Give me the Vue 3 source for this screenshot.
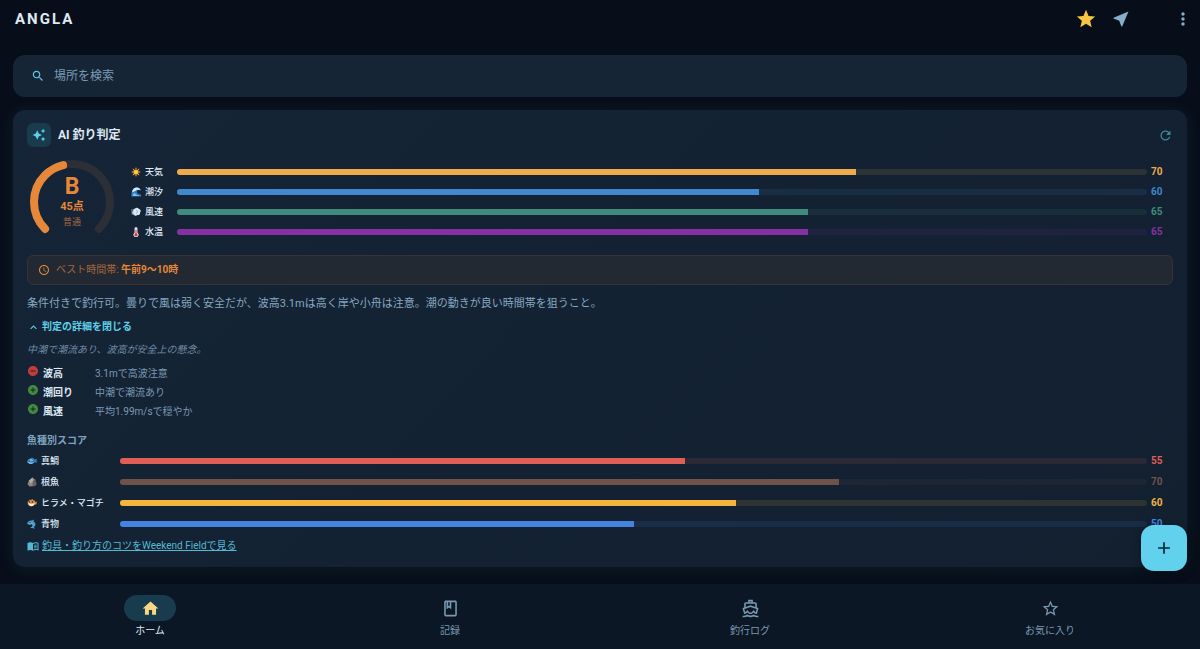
<script setup>
import { ref } from 'vue'

const query = ref('')
const open = ref(true)

const scores = [
  { key: 'sun', label: '天気', value: 70, color: '#efab4b' },
  { key: 'wave', label: '潮汐', value: 60, color: '#4088cf' },
  { key: 'wind', label: '風速', value: 65, color: '#3f8c7e' },
  { key: 'thermo', label: '水温', value: 65, color: '#8730a4' },
]

const factors = [
  { good: false, name: '波高', text: '3.1mで高波注意' },
  { good: true, name: '潮回り', text: '中潮で潮流あり' },
  { good: true, name: '風速', text: '平均1.99m/sで穏やか' },
]

const species = [
  { key: 'fish', label: '真鯛', value: 55, color: '#df5f57' },
  { key: 'rock', label: '根魚', value: 70, color: '#6f534b' },
  { key: 'puffer', label: 'ヒラメ・マゴチ', value: 60, color: '#f4b53f' },
  { key: 'dolphin', label: '青物', value: 50, color: '#4583e0' },
]

const groups = [
  { name: 'scores', rows: scores },
  { name: 'species', rows: species },
]

const tabs = [
  { label: 'ホーム', active: true, path: 'M10 20v-6h4v6h5v-8h3L12 3 2 12h3v8z' },
  {
    label: '記録',
    path: 'M18 2H6c-1.1 0-2 .9-2 2v16c0 1.1.9 2 2 2h12c1.1 0 2-.9 2-2V4c0-1.1-.9-2-2-2zM9 4h2v5l-1-.75L9 9V4zm9 16H6V4h1v9l3-2.25L13 13V4h5v16z',
  },
  {
    label: '釣行ログ',
    path: 'M13 3v1h-2V3h2m-1 7.11l5.38 1.77 2.39.78-1.12 3.97c-.54-.3-.94-.71-1.14-.94L16 13.96l-1.51 1.72c-.34.4-1.28 1.32-2.49 1.32s-2.15-.92-2.49-1.32L8 13.96l-1.51 1.72c-.2.23-.6.63-1.14.93l-1.13-3.96 2.4-.79L12 10.11M15 1H9v3H6c-1.1 0-2 .9-2 2v4.62l-1.29.42c-.26.08-.48.26-.6.5s-.15.52-.06.78L3.95 19H4c1.6 0 3.02-.88 4-2 .98 1.12 2.4 2 4 2s3.02-.88 4-2c.98 1.12 2.4 2 4 2h.05l1.89-6.68c.08-.26.06-.54-.06-.78s-.34-.42-.6-.5L20 10.62V6c0-1.1-.9-2-2-2h-3V1zM6 9.97V6h12v3.97L12 8 6 9.97zM16 19.68c-1.22.85-2.61 1.28-4 1.28s-2.78-.43-4-1.28C6.78 20.53 5.39 21 4 21H2v2h2c1.38 0 2.74-.35 4-.99 1.26.64 2.63.97 4 .97s2.74-.32 4-.97c1.26.65 2.62.99 4 .99h2v-2h-2c-1.39 0-2.78-.43-4-1.32z',
  },
  {
    label: 'お気に入り',
    path: 'M22 9.24l-7.19-.62L12 2 9.19 8.63 2 9.24l5.46 4.73L5.82 21 12 17.27 18.18 21l-1.63-7.03L22 9.24zM12 15.4l-3.76 2.27 1-4.28-3.32-2.88 4.38-.38L12 6.1l1.71 4.04 4.38.38-3.32 2.88 1 4.28L12 15.4z',
  },
]
</script>

<template>
  <div class="app">
    <!-- shared pictograms for the score rows -->
    <svg class="defs" aria-hidden="true">
      <symbol id="sun" viewBox="0 0 20 20">
        <path fill="#f29a2e" d="M10 0l1.6 4h-3.200zM10 20l-1.600-4h3.200zM0 10l4-1.600v3.200zM20 10l-4 1.600V8.400zM3 3l4 1.700L4.700 7zM17 3l-1.700 4L13 4.700zM3 17l1.700-4L7 15.300zM17 17l-4-1.700 2.300-2.300z" />
        <circle cx="10" cy="10" r="5.200" fill="#fbc638" />
      </symbol>
      <symbol id="wave" viewBox="0 0 20 20">
        <path fill="#2f7fc0" d="M1 19C0 9 4 1 11 1c5 0 8 3 8 6-3-2-7-1-7 3 0 3 3 5 8 5v4z" />
        <path fill="#d5edf8" d="M3 7C5 2 9 0 13 1c4 1 6 3 6 6-2-2-4-2-6-1-2-1-3 0-3 2-2-1-3 0-4 2-1-1-2-1-4 1z" />
        <path fill="#7cc4e8" d="M3 18c0-3 2-5 5-6 1 3 4 5 8 5v1z" />
      </symbol>
      <symbol id="wind" viewBox="0 0 20 20">
        <path fill="#d9e8f3" d="M8 3a5 5 0 0 1 8 1 4 4 0 0 1 2 7 4 4 0 0 1-5 5 5 5 0 0 1-8-1 4 4 0 0 1-1-7 5 5 0 0 1 4-5z" />
        <path fill="none" stroke="#8fb2cc" stroke-width="1.600" d="M0 6h6M0 10h5M1 14h5M10 7a3 3 0 1 1 0 6" />
      </symbol>
      <symbol id="thermo" viewBox="0 0 20 20">
        <path fill="#d9dde3" d="M7 3a3 3 0 0 1 6 0v8.500a5 5 0 1 1-6 0z" />
        <path fill="#d33b3b" d="M9 6h2v7a3 3 0 1 1-2 0z" />
      </symbol>
      <symbol id="fish" viewBox="0 0 20 20">
        <path fill="#2f78b5" d="M6 5c3-3 7-2 9 2l4-2c1 3 1 6 0 9l-4-2c-3 5-12 5-15-1 1-3 3-5 6-6z" />
        <path fill="#8fd0f0" d="M0 11c3 2 10 3 15 1-3 5-12 5-15-1z" />
        <path fill="#69b4e2" d="M2 9c3-4 8-4 11 0-3 2-7 3-11 0z" />
        <circle cx="4.500" cy="9.500" r="1.200" fill="#10263c" />
      </symbol>
      <symbol id="rock" viewBox="0 0 20 20">
        <path fill="#8c8781" d="M1 14L4 7l7-6 5 4 3 9-3 4-11 1z" />
        <path fill="#b4aea6" d="M4 7l7-6 1 7-5 5z" />
        <path fill="#66615d" d="M12 8l4-3 3 9-3 4-5 .5z" />
      </symbol>
      <symbol id="puffer" viewBox="0 0 20 20">
        <path fill="#cf8a45" d="M1 7l3-1 1-3 3 1 3-2 2 3 3 0 0 3 4-1-1 6-4 0c-2 4-10 5-13 0z" />
        <path fill="#fbe9cd" d="M2 9c4 3 9 3 14 1-1 8-13 9-14-1z" />
        <circle cx="5" cy="8" r="1.300" fill="#3b2618" />
        <circle cx="11" cy="8" r="1.300" fill="#3b2618" />
      </symbol>
      <symbol id="dolphin" viewBox="0 0 20 20">
        <path fill="#4b9fcd" d="M0 9c2-5 6-7 10-6l4-2-1 4c5 3 5 8 1 11l1 4-4-2-5 0 4-3c2-2 2-4 0-5-3 1-7 1-10-1z" />
        <path fill="#a9dbef" d="M1 10c3 0 6 0 9-1 2 1 3 3 2 5 0-2-1-4-2-4-3 1-6 1-9 0z" />
        <circle cx="6" cy="7" r="1" fill="#10263c" />
      </symbol>
    </svg>

    <header class="bar">
      <h1 class="logo">ANGLA</h1>
      <div class="actions">
        <button class="icon-btn star" aria-label="お気に入りに追加">
          <svg viewBox="0 0 24 24"><path d="M12 17.270L18.180 21l-1.640-7.030L22 9.240l-7.190-.61L12 2 9.190 8.630 2 9.240l5.460 4.730L5.820 21z" /></svg>
        </button>
        <button class="icon-btn" aria-label="現在地">
          <svg viewBox="0 0 24 24"><path d="M21 3L3 10.530v.98l6.840 2.650L12.480 21h.98L21 3z" /></svg>
        </button>
        <button class="icon-btn more" aria-label="メニュー">
          <svg viewBox="0 0 24 24"><path d="M12 8c1.100 0 2-.9 2-2s-.9-2-2-2-2 .9-2 2 .9 2 2 2zm0 2c-1.100 0-2 .9-2 2s.9 2 2 2 2-.9 2-2-.9-2-2-2zm0 6c-1.100 0-2 .9-2 2s.9 2 2 2 2-.9 2-2-.9-2-2-2z" /></svg>
        </button>
      </div>
    </header>

    <main class="content">
      <label class="search">
        <svg viewBox="0 0 24 24"><path d="M15.500 14h-.79l-.28-.27C15.410 12.590 16 11.110 16 9.500 16 5.910 13.090 3 9.500 3S3 5.910 3 9.500 5.910 16 9.500 16c1.610 0 3.090-.59 4.230-1.570l.27.28v.79l5 4.990L20.490 19l-4.990-5zm-6 0C7.010 14 5 11.990 5 9.500S7.010 5 9.500 5 14 7.010 14 9.500 11.990 14 9.500 14z" /></svg>
        <input v-model="query" type="search" placeholder="場所を検索" aria-label="場所を検索" />
      </label>

      <section class="card">
        <div class="card-head">
          <span class="badge">
            <svg viewBox="0 0 24 24"><path d="M19 9l1.250-2.750L23 5l-2.750-1.250L19 1l-1.250 2.750L15 5l2.750 1.250L19 9zm-7.500.5L9 4 6.500 9.500 1 12l5.500 2.500L9 20l2.500-5.500L17 12l-5.500-2.500zM19 15l-1.250 2.750L15 19l2.750 1.250L19 23l1.250-2.750L23 19l-2.750-1.250L19 15z" /></svg>
          </span>
          <h2>AI 釣り判定</h2>
          <button class="refresh" aria-label="更新">
            <svg viewBox="0 0 24 24"><path d="M17.650 6.350C16.200 4.900 14.210 4 12 4c-4.420 0-7.990 3.580-7.990 8s3.570 8 7.990 8c3.730 0 6.840-2.550 7.730-6h-2.080c-.82 2.330-3.040 4-5.650 4-3.310 0-6-2.690-6-6s2.690-6 6-6c1.660 0 3.140.69 4.220 1.780L13 11h7V4l-2.350 2.350z" /></svg>
          </button>
        </div>

        <div class="overview">
          <div class="gauge">
            <svg viewBox="0 0 90 90" fill="none" stroke-width="8" stroke-linecap="round">
              <path class="ring" pathLength="100" d="M18.100 71.900A38 38 0 1 1 71.900 71.900" />
              <path class="arc" pathLength="100" stroke-dasharray="45 200" d="M18.100 71.900A38 38 0 1 1 71.900 71.900" />
            </svg>
            <div class="grade">
              <strong>B</strong>
              <b>45点</b>
              <span>普通</span>
            </div>
          </div>
          <ul class="rows scores">
            <li v-for="r in scores" :key="r.key" :style="{ '--c': r.color }">
              <span class="label"><svg><use :href="'#' + r.key" /></svg>{{ r.label }}</span>
              <span class="track"><i :style="{ width: r.value + '%' }"></i></span>
              <b>{{ r.value }}</b>
            </li>
          </ul>
        </div>

        <p class="best">
          <svg viewBox="0 0 24 24"><path d="M11.990 2C6.470 2 2 6.480 2 12s4.470 10 9.990 10C17.520 22 22 17.520 22 12S17.520 2 11.990 2zM12 20c-4.420 0-8-3.580-8-8s3.580-8 8-8 8 3.580 8 8-3.580 8-8 8zm.5-13H11v6l5.250 3.150.75-1.230-4.500-2.670z" /></svg>
          <span>ベスト時間帯: <b>午前9〜10時</b></span>
        </p>

        <p class="summary">条件付きで釣行可。曇りで風は弱く安全だが、波高3.1mは高く岸や小舟は注意。潮の動きが良い時間帯を狙うこと。</p>

        <button class="toggle" :aria-expanded="open" @click="open = !open">
          <svg viewBox="0 0 24 24"><path d="M12 8l-6 6 1.410 1.410L12 10.830l4.590 4.580L18 14z" /></svg>
          判定の詳細を閉じる
        </button>

        <div v-if="open">
          <p class="note">中潮で潮流あり、波高が安全上の懸念。</p>
          <ul class="factors">
            <li v-for="f in factors" :key="f.name">
              <svg viewBox="0 0 24 24" :class="{ good: f.good }">
                <path v-if="f.good" d="M12 2C6.480 2 2 6.480 2 12s4.480 10 10 10 10-4.480 10-10S17.520 2 12 2zm5 11h-4v4h-2v-4H7v-2h4V7h2v4h4v2z" />
                <path v-else d="M12 2C6.480 2 2 6.480 2 12s4.480 10 10 10 10-4.480 10-10S17.520 2 12 2zm5 11H7v-2h10v2z" />
              </svg>
              <b>{{ f.name }}</b>
              <span>{{ f.text }}</span>
            </li>
          </ul>
        </div>

        <h3>魚種別スコア</h3>
        <ul class="rows species">
          <li v-for="r in species" :key="r.key" :style="{ '--c': r.color }">
            <span class="label"><svg><use :href="'#' + r.key" /></svg>{{ r.label }}</span>
            <span class="track"><i :style="{ width: r.value + '%' }"></i></span>
            <b>{{ r.value }}</b>
          </li>
        </ul>

        <a class="guide" href="#">
          <svg viewBox="0 0 24 24"><path d="M21 5c-1.110-.35-2.330-.5-3.500-.5-1.950 0-4.050.4-5.500 1.500-1.450-1.100-3.550-1.500-5.500-1.500S2.450 4.900 1 6v14.650c0 .25.25.5.5.5.1 0 .15-.05.25-.05C3.100 20.450 5.050 20 6.500 20c1.950 0 4.050.4 5.500 1.500 1.350-.85 3.800-1.500 5.500-1.500 1.650 0 3.350.3 4.750 1.050.1.05.15.05.25.05.25 0 .5-.25.5-.5V6c-.6-.45-1.250-.75-2-1zm0 13.500c-1.100-.35-2.300-.5-3.500-.5-1.700 0-4.150.65-5.500 1.500V8c1.350-.85 3.800-1.500 5.500-1.500 1.200 0 2.400.15 3.500.5v11.500zM14 9.500h5.500V11H14zM14 12.200h5.500v1.500H14zM14 15h5.500v1.500H14z" /></svg>
          <span>釣具・釣り方のコツをWeekend Fieldで見る</span>
        </a>
      </section>
    </main>

    <div class="dock">
      <button class="fab" aria-label="追加">
        <svg viewBox="0 0 24 24"><path d="M19 13h-6v6h-2v-6H5v-2h6V5h2v6h6v2z" /></svg>
      </button>
      <nav class="tabs">
        <a v-for="t in tabs" :key="t.label" href="#" :class="{ active: t.active }">
          <span class="pill"><svg viewBox="0 0 24 24"><path :d="t.path" /></svg></span>
          {{ t.label }}
        </a>
      </nav>
    </div>
  </div>
</template>

<style>
body {
  margin: 0;
  background: #080e19;
}
</style>

<style scoped>
* {
  box-sizing: border-box;
}
.app {
  min-height: 100vh;
  display: flex;
  flex-direction: column;
  background: #080e19;
  color: #dfe9f4;
  font-family: Roboto, "Noto Sans CJK JP", sans-serif;
  font-size: 10px;
  line-height: 16px;
}
h1, h2, h3, p, ul {
  margin: 0;
  padding: 0;
  list-style: none;
}
button {
  padding: 0;
  border: 0;
  background: none;
  color: inherit;
  font: inherit;
  cursor: pointer;
}
svg {
  display: block;
  fill: currentColor;
  flex: none;
}
.defs {
  position: absolute;
  width: 0;
  height: 0;
}

.bar {
  display: flex;
  align-items: center;
  justify-content: space-between;
  height: 38px;
  padding: 0 7px 0 15px;
}
.logo {
  font-size: 15px;
  line-height: 20px;
  font-weight: 700;
  letter-spacing: 2px;
}
.actions {
  display: flex;
  align-items: center;
  gap: 14px;
  color: #88adc9;
}
.icon-btn svg {
  width: 20px;
  height: 20px;
}
.star {
  color: #f8c441;
}
.star svg {
  width: 22px;
  height: 22px;
}
.more {
  margin-left: 28px;
}

.content {
  display: flex;
  flex-direction: column;
  gap: 13px;
  padding: 17px 13px;
}
.search {
  display: flex;
  align-items: center;
  gap: 9px;
  height: 42px;
  padding: 0 18px;
  border-radius: 12px;
  background: #162536;
}
.search svg {
  width: 14px;
  height: 14px;
  color: #5cc8e2;
}
.search input {
  flex: 1;
  min-width: 0;
  padding: 0;
  border: 0;
  outline: 0;
  background: none;
  color: #dfe9f4;
  font: inherit;
  font-size: 12px;
}
.search input::placeholder {
  color: #7b9ab3;
  opacity: 1;
}

.card {
  padding: 13px 14px;
  border-radius: 12px;
  background: linear-gradient(135deg, #152436, #122030);
  box-shadow: 0 2px 16px rgba(30, 110, 130, 0.16);
}
.card-head {
  display: flex;
  align-items: center;
  gap: 7px;
}
.badge {
  display: grid;
  place-items: center;
  width: 24px;
  height: 24px;
  border-radius: 6px;
  background: #183c4e;
  color: #5fd0ea;
}
.badge svg {
  width: 14px;
  height: 14px;
}
h2 {
  flex: 1;
  font-size: 12px;
  font-weight: 700;
}
.refresh {
  color: #3d8697;
}
.refresh svg {
  width: 15px;
  height: 15px;
}

.overview {
  display: flex;
  align-items: center;
  gap: 14px;
  margin: 10px 0 8px;
}
.gauge {
  display: grid;
  place-items: center;
  flex: none;
  color: #e6873a;
}
.gauge > * {
  grid-area: 1 / 1;
}
.gauge svg {
  width: 90px;
  height: 90px;
  fill: none;
}
.ring {
  stroke: #2d2f36;
}
.arc {
  stroke: #e6873a;
}
.grade {
  display: flex;
  flex-direction: column;
  align-items: center;
}
.grade strong {
  font-size: 23px;
  line-height: 24px;
}
.grade b {
  font-size: 11px;
}
.grade span {
  font-size: 9px;
  line-height: 14px;
  color: #a5673a;
}

.rows {
  flex: 1;
}
.rows li {
  display: flex;
  align-items: center;
  height: 20px;
}
.species li {
  height: 21px;
}
.label {
  display: flex;
  align-items: center;
  gap: 4px;
  width: 46px;
  font-size: 9px;
  font-weight: 500;
}
.species .label {
  width: 93px;
}
.label svg {
  width: 10px;
  height: 10px;
}
.track {
  position: relative;
  flex: 1;
  height: 6px;
  border-radius: 3px;
  overflow: hidden;
  background: color-mix(in srgb, var(--c) 12%, transparent);
}
.track i {
  display: block;
  height: 100%;
  background: var(--c);
}
.rows b {
  width: 26px;
  padding-left: 4px;
  color: var(--c);
}

.best {
  display: flex;
  align-items: center;
  gap: 6px;
  height: 30px;
  padding: 0 10px;
  border: 1px solid #373333;
  border-radius: 6px;
  background: #232933;
  color: #a5673a;
}
.best svg {
  width: 12px;
  height: 12px;
  color: #e6873a;
}
.best b {
  color: #e6873a;
}
.summary {
  margin-top: 9px;
  font-size: 11px;
  line-height: 20px;
  color: #86a8c0;
}
.toggle {
  display: flex;
  align-items: center;
  gap: 2px;
  margin: 5px 0 7px;
  color: #5fd0ea;
  font-weight: 700;
}
.toggle svg {
  width: 13px;
  height: 13px;
}
.note {
  color: #6e8ba3;
  font-style: italic;
}
.factors {
  margin: 6px 0 12px;
}
.factors li {
  display: flex;
  line-height: 19px;
  color: #7b9ab3;
}
.factors svg {
  width: 12px;
  height: 12px;
  margin-top: 1px;
  color: #c33c3a;
}
.factors svg.good {
  color: #418a3e;
}
.factors b {
  width: 52px;
  margin-left: 4px;
  color: #dfe9f4;
}
h3 {
  font-size: 10px;
  font-weight: 700;
  color: #7fa3bd;
  margin-bottom: 1px;
}
.guide {
  display: flex;
  align-items: center;
  gap: 3px;
  width: max-content;
  margin-top: 4px;
  color: #53bad2;
  text-decoration: none;
}
.guide span {
  text-decoration: underline;
}
.guide svg {
  width: 12px;
  height: 12px;
}

.dock {
  position: sticky;
  bottom: 0;
  margin-top: auto;
}
.fab {
  position: absolute;
  right: 13px;
  bottom: calc(100% + 13px);
  display: grid;
  place-items: center;
  width: 46px;
  height: 46px;
  border-radius: 13px;
  background: #61d1ed;
  color: #0b2530;
  box-shadow: 0 3px 8px rgba(0, 0, 0, 0.4);
}
.fab svg {
  width: 20px;
  height: 20px;
}
.tabs {
  display: grid;
  grid-template-columns: repeat(4, 1fr);
  padding: 11px 0 10px;
  background: #0c1725;
}
.tabs a {
  display: flex;
  flex-direction: column;
  align-items: center;
  gap: 2px;
  color: #7898b0;
  text-decoration: none;
}
.tabs .active {
  color: #dfe9f4;
}
.pill {
  display: grid;
  place-items: center;
  width: 52px;
  height: 26px;
  border-radius: 13px;
}
.active .pill {
  background: #183c4e;
  color: #f8d683;
}
.pill svg {
  width: 19px;
  height: 19px;
}
</style>
